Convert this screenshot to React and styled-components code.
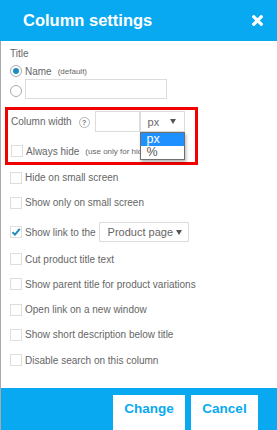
import React from 'react';
import styled, { createGlobalStyle } from 'styled-components';

const GlobalStyle = createGlobalStyle`
  html, body {
    margin: 0;
    padding: 0;
    background: #fff;
    overflow: hidden;
  }
  body {
    font-family: "Liberation Sans", Arial, sans-serif;
    color: #666;
  }
`;

const Dialog = styled('div')`
  width: 277px;
  height: 430px;
  display: flex;
  flex-direction: column;
  overflow: hidden;
`;

const Header = styled('div')`
  height: 41px;
  flex-shrink: 0;
  background: #09a9f1;
  display: flex;
  align-items: center;
  justify-content: space-between;
  padding: 0 14px 0 23px;
`;

const HeaderTitle = styled('div')`
  color: #fff;
  font-weight: bold;
  font-size: 16.5px;
`;

const CloseIcon = styled('svg')`
  display: block;
  width: 11px;
  height: 11px;
`;

const Body = styled('div')`
  flex: 1;
  border-left: 1px solid #a9a9a9;
  padding: 6px 0 0 9px;
  display: flex;
  flex-direction: column;
`;

const Label = styled('div')`
  font-size: 10px;
  height: 14px;
  line-height: 14px;
`;

const RadioRow = styled('div')`
  display: flex;
  align-items: center;
  gap: 3px;
  height: ${p => p.h || 16}px;
  margin-top: ${p => p.mt || 0}px;
  font-size: 10px;
`;

const Radio = styled('span')`
  box-sizing: border-box;
  width: 12px;
  height: 12px;
  border-radius: 50%;
  border: 1px solid #a8adb2;
  background: #fff;
  display: flex;
  align-items: center;
  justify-content: center;
  flex-shrink: 0;
  margin-top: ${p => p.mt || 0}px;
  &::after {
    content: '';
    display: ${p => (p.checked ? 'block' : 'none')};
    width: 6px;
    height: 6px;
    border-radius: 50%;
    background: #1e8cbe;
  }
`;

const Small = styled('span')`
  font-size: 8px;
  margin-left: 3px;
`;

const TextInput = styled('div')`
  box-sizing: border-box;
  width: ${p => p.w}px;
  height: ${p => p.h || 20}px;
  border: 1px solid #dcdcdc;
  background: #fff;
`;

const Highlight = styled('div')`
  margin: 8px 0 0 -5px;
  width: 193px;
  box-sizing: border-box;
  border: 3px solid #f00000;
  padding: 1px 0 2px 3px;
`;

const WidthRow = styled('div')`
  display: flex;
  align-items: center;
  height: 21px;
  font-size: 10px;
`;

const HelpIcon = styled('span')`
  box-sizing: border-box;
  width: 11px;
  height: 11px;
  border-radius: 50%;
  border: 1px solid #b5b5b5;
  font-size: 7px;
  font-weight: bold;
  color: #777;
  display: flex;
  align-items: center;
  justify-content: center;
  margin: 2px 5px 0 7px;
`;

const SelectWrap = styled('div')`
  position: relative;
`;

const Select = styled('div')`
  box-sizing: border-box;
  width: ${p => p.w}px;
  height: ${p => p.h || 21}px;
  border: 1px solid #dcdcdc;
  background: #fff;
  display: flex;
  align-items: center;
  justify-content: space-between;
  margin-left: ${p => p.ml || 0}px;
  padding: 0 ${p => p.pr || 8}px 0 ${p => p.pl || 7}px;
  font-size: ${p => p.fs || 11}px;
  color: #666;
  white-space: nowrap;
`;

const Arrow = styled('span')`
  width: 0;
  height: 0;
  border-left: 3px solid transparent;
  border-right: 3px solid transparent;
  border-top: 5px solid #555;
`;

const Dropdown = styled('div')`
  position: absolute;
  left: 0;
  top: 21px;
  width: 45px;
  box-sizing: border-box;
  border: 1px solid #6f6f6f;
  background: #fff;
  box-shadow: 1px 2px 3px rgba(0, 0, 0, 0.3);
  z-index: 2;
`;

const Option = styled('div')`
  height: 13px;
  line-height: 13px;
  padding-left: 6px;
  font-size: 12.5px;
  color: ${p => (p.active ? '#fff' : '#555')};
  background: ${p => (p.active ? '#1e90ff' : '#fff')};
`;

const Row = styled('div')`
  display: flex;
  align-items: center;
  gap: 3px;
  height: ${p => p.h || 25.3}px;
  margin-top: ${p => p.mt || 0}px;
  font-size: 10px;
  white-space: nowrap;
  overflow: ${p => (p.clip ? 'hidden' : 'visible')};
  width: ${p => (p.clip ? '173px' : 'auto')};
`;

const Box = styled('span')`
  box-sizing: border-box;
  width: 12px;
  height: 12px;
  border: 1px solid #dedede;
  background: #fff;
  flex-shrink: 0;
  display: flex;
  align-items: center;
  justify-content: center;
`;

const Footer = styled('div')`
  height: 42px;
  flex-shrink: 0;
  background: #09a9f1;
  border-left: 1px solid #a9a9a9;
  display: flex;
  justify-content: flex-end;
  align-items: flex-start;
  gap: 6px;
  padding: 7px 19px 0 0;
  box-sizing: border-box;
`;

const Button = styled('div')`
  width: ${p => p.w}px;
  height: 36px;
  background: #fff;
  color: #09a9f1;
  font-weight: bold;
  font-size: 13.5px;
  line-height: 28px;
  text-align: center;
`;

const Check = () => (
  <svg width="10" height="10" viewBox="0 0 10 10">
    <path d="M1.5 5.2 L4 7.6 L8.8 1.8" fill="none" stroke="#1e8cbe" strokeWidth="2" />
  </svg>
);

const CheckRow = ({ children, checked, ...rest }) => (
  <Row {...rest}>
    <Box>{checked && <Check />}</Box>
    {children}
  </Row>
);

const App = () => (
  <Dialog>
    <GlobalStyle />
    <Header>
      <HeaderTitle>Column settings</HeaderTitle>
      <CloseIcon viewBox="0 0 11 11">
        <path d="M1.8 1.8 L9.2 9.2 M9.2 1.8 L1.8 9.2" stroke="#fff" strokeWidth="3.2" strokeLinecap="square" />
      </CloseIcon>
    </Header>
    <Body>
      <Label>Title</Label>
      <RadioRow mt={2}>
        <Radio checked />
        Name
        <Small>(default)</Small>
      </RadioRow>
      <RadioRow h={20}>
        <Radio mt={4} />
        <TextInput w={142} />
      </RadioRow>
      <Highlight>
        <WidthRow>
          Column width
          <HelpIcon>?</HelpIcon>
          <TextInput w={45} h={21} />
          <SelectWrap>
            <Select w={45}>
              px
              <Arrow />
            </Select>
            <Dropdown>
              <Option active>px</Option>
              <Option>%</Option>
            </Dropdown>
          </SelectWrap>
        </WidthRow>
        <CheckRow h={18} mt={10} clip>
          Always hide
          <Small>(use only for hidden columns)</Small>
        </CheckRow>
      </Highlight>
      <CheckRow>Hide on small screen</CheckRow>
      <CheckRow>Show only on small screen</CheckRow>
      <CheckRow checked mt={4}>
        Show link to the
        <Select w={90} h={20} pl={8} pr={6} fs={11}>
          Product page
          <Arrow />
        </Select>
      </CheckRow>
      <CheckRow mt={1.5}>Cut product title text</CheckRow>
      <CheckRow>Show parent title for product variations</CheckRow>
      <CheckRow>Open link on a new window</CheckRow>
      <CheckRow>Show short description below title</CheckRow>
      <CheckRow>Disable search on this column</CheckRow>
    </Body>
    <Footer>
      <Button w={72}>Change</Button>
      <Button w={67}>Cancel</Button>
    </Footer>
  </Dialog>
);

export default App;
